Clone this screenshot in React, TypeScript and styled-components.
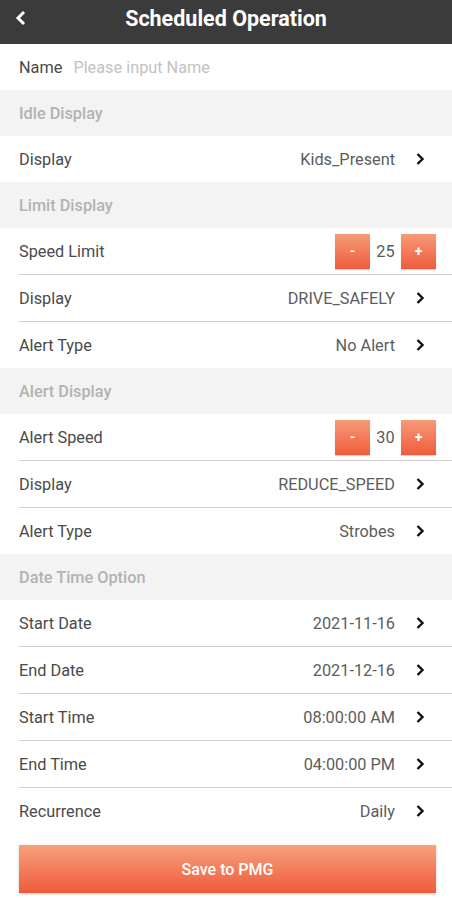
import React from "react";
import styled, { createGlobalStyle } from "styled-components";

const GlobalStyle = createGlobalStyle`
  body {
    margin: 0;
    padding: 0;
    background: #ffffff;
    font-family: Roboto, "Liberation Sans", sans-serif;
  }
`;

const Page = styled.div`
  width: 452px;
  min-height: 900px;
  background: #fff;
  display: flex;
  flex-direction: column;
`;

const Header = styled.div`
  height: 44px;
  background: #3b3b3b;
  display: flex;
  align-items: center;
  justify-content: center;
  position: relative;
`;

const BackButton = styled.div`
  position: absolute;
  left: 14px;
  top: 10px;
  width: 14px;
  height: 16px;
  display: flex;
`;

const Title = styled.h1`
  margin: 0;
  margin-top: -8px;
  color: #fff;
  font-size: 21.5px;
  font-weight: 700;
`;

const SectionHeader = styled.div`
  height: 46px;
  background: #f3f3f3;
  display: flex;
  align-items: center;
  padding-left: 19px;
  color: #b2b2b2;
  font-size: 16.3px;
  font-weight: 500;
`;

const Row = styled.div<{ $divider?: boolean }>`
  height: 46px;
  display: flex;
  align-items: center;
  margin-left: 19px;
  padding-right: 16px;
  border-bottom: ${(p) => (p.$divider ? "1px solid #cfcfcf" : "none")};
`;

const Label = styled.span`
  color: #4a4a4a;
  font-size: 16.3px;
  flex: 1;
`;

const Value = styled.span`
  color: #5c5c5c;
  font-size: 16.3px;
  margin-right: 20px;
`;

const NameLabel = styled.span`
  color: #4a4a4a;
  font-size: 16.3px;
  margin-right: 11px;
`;

const Placeholder = styled.span`
  color: #c2c2c2;
  font-size: 16.3px;
`;

const Chevron = styled.svg`
  width: 10px;
  height: 14px;
  margin-right: 11px;
`;

const Stepper = styled.div`
  display: flex;
  align-items: center;
`;

const StepButton = styled.div`
  width: 35px;
  height: 35px;
  background: linear-gradient(#f79a78, #ee5c3c);
  color: #fff;
  font-size: 14px;
  font-weight: 700;
  display: flex;
  align-items: center;
  justify-content: center;
  box-shadow: 0 1px 1px rgba(0, 0, 0, 0.15);
`;

const StepValue = styled.span`
  color: #5c5c5c;
  font-size: 16.3px;
  width: 31px;
  text-align: center;
`;

const SaveButton = styled.div`
  margin: 11px 16px 0 19px;
  height: 48px;
  background: linear-gradient(#f8a07c, #ee5b3b);
  color: #fff;
  font-size: 16px;
  font-weight: 500;
  display: flex;
  align-items: center;
  justify-content: center;
  box-shadow: 0 1px 3px rgba(0, 0, 0, 0.2);
`;

const Arrow = () => (
  <Chevron viewBox="0 0 10 14">
    <polyline points="2.5,2 7.5,7 2.5,12" fill="none" stroke="#111" strokeWidth="2.4" />
  </Chevron>
);

type NavRowProps = { label: string; value: string; divider?: boolean };

const NavRow = ({ label, value, divider }: NavRowProps) => (
  <Row $divider={divider}>
    <Label>{label}</Label>
    <Value>{value}</Value>
    <Arrow />
  </Row>
);

type StepRowProps = { label: string; value: number; divider?: boolean };

const StepRow = ({ label, value, divider }: StepRowProps) => (
  <Row $divider={divider}>
    <Label>{label}</Label>
    <Stepper>
      <StepButton>-</StepButton>
      <StepValue>{value}</StepValue>
      <StepButton>+</StepButton>
    </Stepper>
  </Row>
);

const App = () => (
  <Page>
    <GlobalStyle />
    <Header>
      <BackButton>
        <svg width="14" height="16" viewBox="0 0 14 16">
          <polyline points="10,2 4,8 10,14" fill="none" stroke="#fff" strokeWidth="3" />
        </svg>
      </BackButton>
      <Title>Scheduled Operation</Title>
    </Header>
    <Row>
      <NameLabel>Name</NameLabel>
      <Placeholder>Please input Name</Placeholder>
    </Row>

    <SectionHeader>Idle Display</SectionHeader>
    <NavRow label="Display" value="Kids_Present" />

    <SectionHeader>Limit Display</SectionHeader>
    <StepRow label="Speed Limit" value={25} divider />
    <NavRow label="Display" value="DRIVE_SAFELY" divider />
    <NavRow label="Alert Type" value="No Alert" />

    <SectionHeader>Alert Display</SectionHeader>
    <StepRow label="Alert Speed" value={30} divider />
    <NavRow label="Display" value="REDUCE_SPEED" divider />
    <NavRow label="Alert Type" value="Strobes" />

    <SectionHeader>Date Time Option</SectionHeader>
    <NavRow label="Start Date" value="2021-11-16" divider />
    <NavRow label="End Date" value="2021-12-16" divider />
    <NavRow label="Start Time" value="08:00:00 AM" divider />
    <NavRow label="End Time" value="04:00:00 PM" divider />
    <NavRow label="Recurrence" value="Daily" />

    <SaveButton>Save to PMG</SaveButton>
  </Page>
);

export default App;
